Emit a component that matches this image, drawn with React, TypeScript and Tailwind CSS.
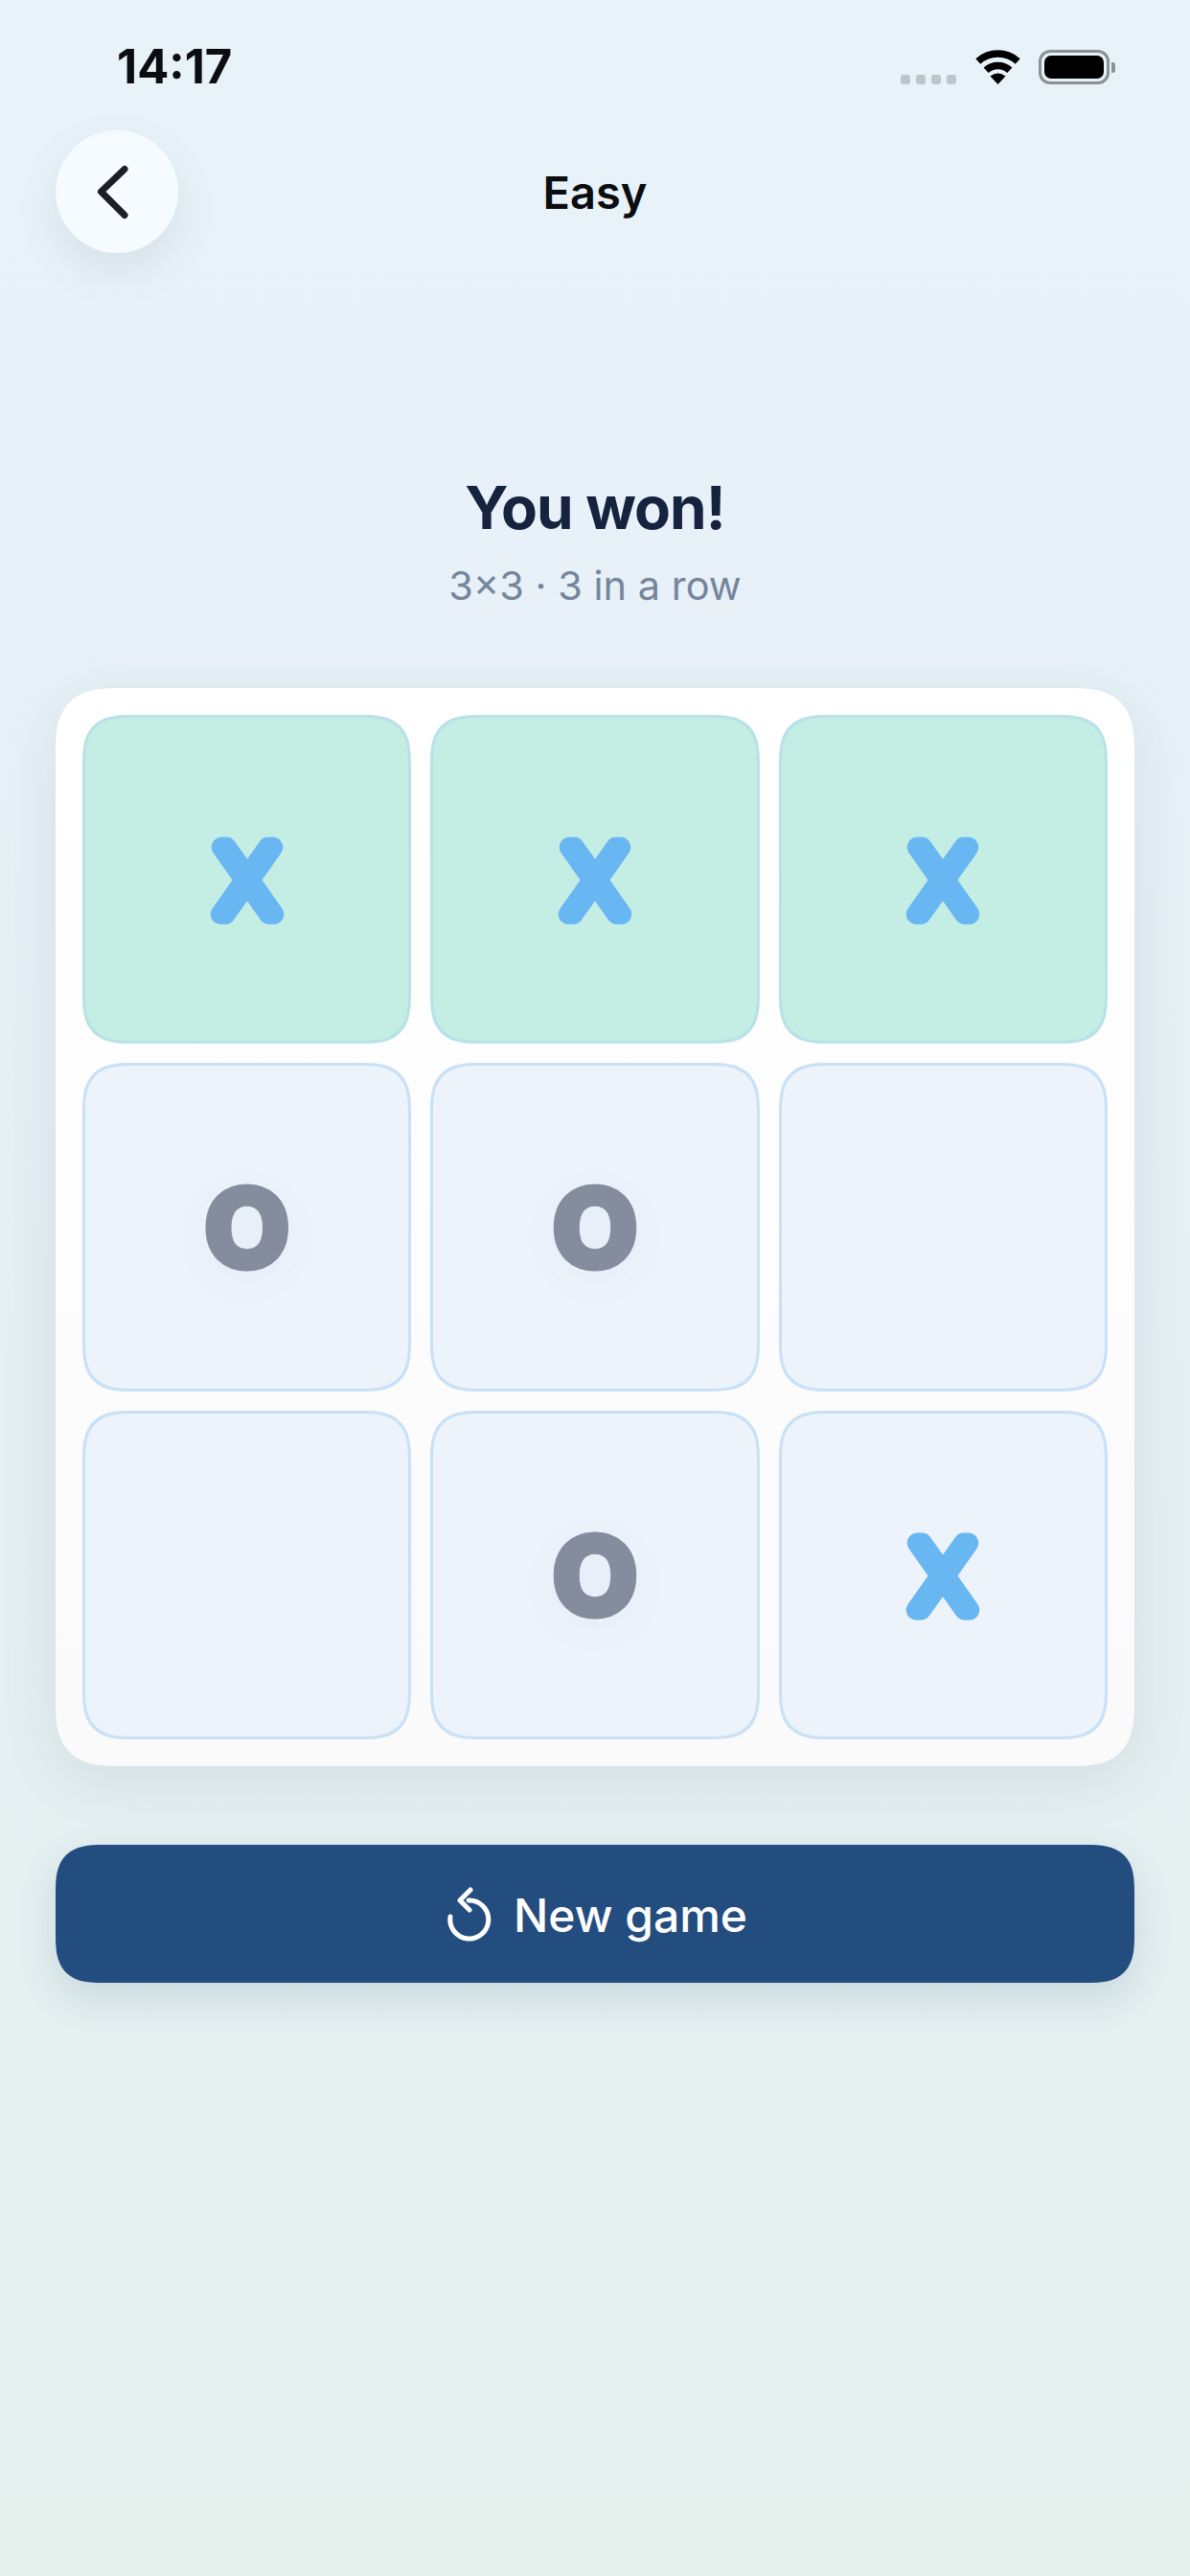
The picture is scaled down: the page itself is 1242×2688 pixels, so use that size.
import React from 'react';

type Mark = 'X' | 'O' | '';

const board: { mark: Mark; won?: boolean }[] = [
  { mark: 'X', won: true },
  { mark: 'X', won: true },
  { mark: 'X', won: true },
  { mark: 'O' },
  { mark: 'O' },
  { mark: '' },
  { mark: '' },
  { mark: 'O' },
  { mark: 'X' },
];

const StatusBar = () => (
  <div className="flex h-[136px] items-start justify-between pl-[122px] pr-[78px] pt-[52px]">
    <span className="text-[49px] font-bold leading-[36px] text-[#0b0d10]">14:17</span>
    <div className="flex h-[36px] items-end">
      <div className="flex gap-[6px]">
        <span className="h-[10px] w-[10px] rounded-[3px] bg-[#bcc5cc]" />
        <span className="h-[10px] w-[10px] rounded-[3px] bg-[#bcc5cc]" />
        <span className="h-[10px] w-[10px] rounded-[3px] bg-[#bcc5cc]" />
        <span className="h-[10px] w-[10px] rounded-[3px] bg-[#bcc5cc]" />
      </div>
      <svg className="ml-[20px]" width="47" height="36" viewBox="0 0 47 36">
        <path d="M2.8 12 A31 31 0 0 1 44.2 12" fill="none" stroke="#000" strokeWidth="7.5" />
        <path d="M11.1 21.2 A18.5 18.5 0 0 1 35.9 21.2" fill="none" stroke="#000" strokeWidth="7.5" />
        <path d="M23.5 36 L15.5 27.5 Q23.5 21.5 31.5 27.5 Z" fill="#000" />
      </svg>
      <div className="ml-[19px] flex items-center">
        <div className="h-[36px] w-[74px] rounded-[12px] border-[3px] border-[#8b9095] p-[3px]">
          <div className="h-full w-full rounded-[7px] bg-black" />
        </div>
        <div className="ml-[2px] h-[11px] w-[4px] rounded-r-[3px] bg-[#8b9095]" />
      </div>
    </div>
  </div>
);

const Cell = ({ mark, won }: { mark: Mark; won?: boolean }) => (
  <div
    className={`flex h-[343px] items-center justify-center rounded-[52px] border-[3px] [corner-shape:superellipse(1.5)] ${
      won ? 'border-[#b9e1e8] bg-[#c4eee3]' : 'border-[#c9e1f6] bg-[#ecf3fb]'
    }`}
  >
    {mark === 'X' && (
      <svg width="160" height="160" viewBox="0 0 160 160" className="overflow-visible">
        <text
          x="80"
          y="116"
          textAnchor="middle"
          fontFamily="Inter, sans-serif"
          fontSize="96"
          fontWeight="200"
          fill="#68b6f2"
          stroke="#68b6f2"
          strokeWidth="21"
          strokeLinejoin="round"
          strokeLinecap="round"
        >
          X
        </text>
      </svg>
    )}
    {mark === 'O' && (
      <span className="text-[118px] font-black leading-none text-[#848c9e] [-webkit-text-stroke:3px_#848c9e] [text-shadow:0_10px_40px_rgba(70,90,120,0.05)]">
        O
      </span>
    )}
  </div>
);

export default function App() {
  return (
    <div className="h-[2688px] w-[1242px] overflow-hidden bg-gradient-to-b from-[#e8f2f9] via-[#e5eff4] to-[#e4f0ec] font-['Inter',sans-serif]">
      <StatusBar />
      <div className="px-[58px]">
        <header className="grid h-[128px] grid-cols-[128px_1fr_128px] items-center">
          <button className="flex h-[128px] w-[128px] items-center justify-center rounded-full bg-[#f6fbff] shadow-[0_18px_44px_rgba(60,90,120,0.10)]">
            <svg width="64" height="64" viewBox="0 0 64 64">
              <path
                d="M40 8.5 L15.5 32 L40 56.5"
                fill="none"
                stroke="#1b2026"
                strokeWidth="7"
                strokeLinecap="round"
                strokeLinejoin="round"
              />
            </svg>
          </button>
          <h1 className="pt-[2px] text-center text-[47px] font-semibold text-[#0b0d10]">Easy</h1>
          <span />
        </header>

        <div className="mt-[228px] text-center">
          <h2 className="text-[62px] font-bold leading-[75px] tracking-[-1px] text-[#15233f]">You won!</h2>
          <p className="mt-[19px] text-[41.5px] leading-[50px] text-[#76859c]">3×3 · 3 in a row</p>
        </div>

        <div className="mt-[82px] grid grid-cols-3 gap-[20px] rounded-[68px] bg-gradient-to-b from-white to-[#fafafa] p-[28px] shadow-[0_16px_60px_rgba(60,90,120,0.11)] [corner-shape:superellipse(1.5)]">
          {board.map((cell, i) => (
            <Cell key={i} mark={cell.mark} won={cell.won} />
          ))}
        </div>

        <button className="mt-[82px] flex h-[144px] w-full items-center justify-center gap-[18px] rounded-[50px] bg-[#234c7f] shadow-[0_16px_40px_rgba(35,76,127,0.14)] [corner-shape:superellipse(1.5)]">
          <svg width="56" height="64" viewBox="0 0 56 64">
            <path
              d="M8 35 A20 20 0 1 0 27 18 M28 28 L18 18 L29 7"
              fill="none"
              stroke="#fff"
              strokeWidth="5"
              strokeLinecap="round"
              strokeLinejoin="round"
            />
          </svg>
          <span className="pt-[3px] text-[48px] font-medium text-white">New game</span>
        </button>
      </div>
    </div>
  );
}
